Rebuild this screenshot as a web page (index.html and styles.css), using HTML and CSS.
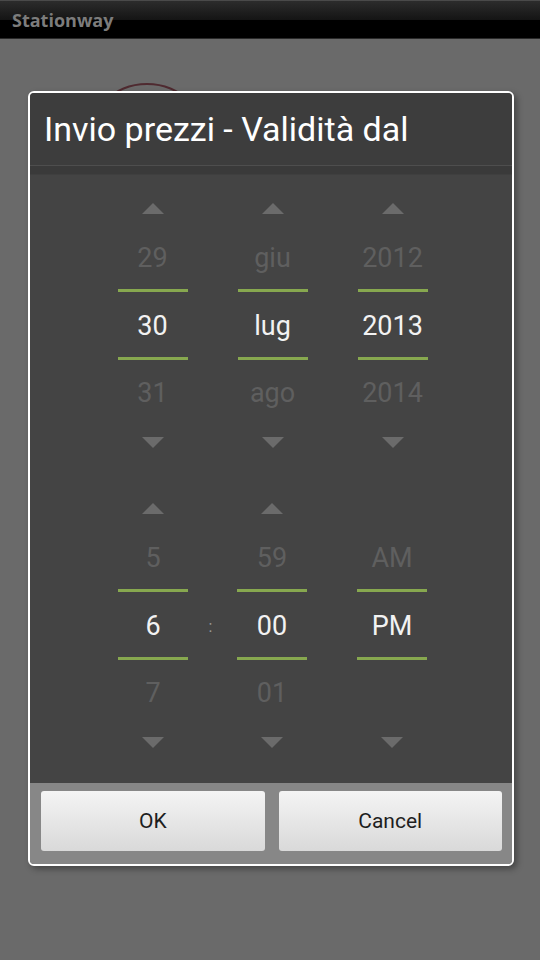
FILE: index.html
```html
<!DOCTYPE html>
<html lang="it">
	<head>
		<meta charset="utf-8">
		<title>Stationway</title>
		<link rel="stylesheet" href="styles.css">
	</head>
	<body>
		<header class="topbar">Stationway</header>

		<main class="screen">
			<div class="logo"></div>

			<div class="dialog">
				<div class="dialogTitle">Invio prezzi - Validità dal</div>

				<div class="dialogBody">
					<!-- Date -->
					<div class="pickerRow dateRow">
						<div class="picker">
							<div class="arrow up"></div>
							<div class="val prev">29</div>
							<div class="val sel">30</div>
							<div class="val next">31</div>
							<div class="arrow down"></div>
						</div>
						<div class="picker">
							<div class="arrow up"></div>
							<div class="val prev">giu</div>
							<div class="val sel">lug</div>
							<div class="val next">ago</div>
							<div class="arrow down"></div>
						</div>
						<div class="picker">
							<div class="arrow up"></div>
							<div class="val prev">2012</div>
							<div class="val sel">2013</div>
							<div class="val next">2014</div>
							<div class="arrow down"></div>
						</div>
					</div>

					<!-- Time -->
					<div class="pickerRow timeRow">
						<div class="picker">
							<div class="arrow up"></div>
							<div class="val prev">5</div>
							<div class="val sel">6</div>
							<div class="val next">7</div>
							<div class="arrow down"></div>
						</div>
						<div class="colon">:</div>
						<div class="picker">
							<div class="arrow up"></div>
							<div class="val prev">59</div>
							<div class="val sel">00</div>
							<div class="val next">01</div>
							<div class="arrow down"></div>
						</div>
						<div></div>
						<div class="picker">
							<div class="arrow up hidden"></div>
							<div class="val prev">AM</div>
							<div class="val sel">PM</div>
							<div class="val next">&nbsp;</div>
							<div class="arrow down"></div>
						</div>
					</div>
				</div>

				<div class="buttonBar">
					<button class="btn">OK</button>
					<button class="btn">Cancel</button>
				</div>
			</div>
		</main>
	</body>
</html>
```

FILE: styles.css
```css
body {
	margin: 0;
	width: 540px;
	height: 960px;
	background-color: #6a6a6a;
	font-family: Roboto, "Noto Sans", sans-serif;
	overflow: hidden;
}

.topbar {
	height: 36px;
	padding-top: 1px;
	padding-left: 12px;
	line-height: 36px;
	border-top: 1px solid #4a4a4a;
	border-bottom: 1px solid #2a2a2a;
	background: linear-gradient(#2c2c2c, #151515 50%, #000 51%, #000);
	color: #7c7c7c;
	font-family: "Open Sans", Roboto, sans-serif;
	font-size: 18px;
	font-weight: bold;
}

.screen {
	position: relative;
	padding-top: 52px;
}

.logo {
	position: absolute;
	left: 85px;
	top: 44px;
	width: 120px;
	height: 120px;
	border: 2px solid #4f2a30;
	border-radius: 50%;
}

.dialog {
	position: relative;
	z-index: 1;
	box-sizing: border-box;
	width: 486px;
	margin-left: 28px;
	border: 2px solid #fff;
	border-radius: 6px;
	overflow: hidden;
	box-shadow: 3px 3px 6px rgba(0, 0, 0, 0.35);
}

.dialogTitle {
	height: 72px;
	padding-left: 14px;
	line-height: 72px;
	background-color: #3d3d3d;
	border-bottom: 1px solid #4e4e4e;
	color: #fff;
	font-size: 34px;
}

.dialogBody {
	height: 617px;
	box-sizing: border-box;
	padding-top: 18px;
	background: linear-gradient(#3a3a3a 0, #3a3a3a 8px, #444 9px);
}

.pickerRow {
	display: flex;
	justify-content: center;
	padding-left: 3px;
}

.dateRow {
	gap: 50px;
	margin-bottom: 19px;
}

.timeRow {
	display: grid;
	grid-template-columns: 70px 49px 70px 50px 70px;
	justify-content: center;
}

.picker {
	width: 70px;
	display: flex;
	flex-direction: column;
	text-align: center;
}

.arrow {
	height: 48px;
	display: flex;
	align-items: center;
	justify-content: center;
}

.arrow.up::before {
	content: "";
	border-left: 11px solid transparent;
	border-right: 11px solid transparent;
	border-bottom: 11px solid #6b6b6b;
}

.arrow.down {
	height: 46px;
}

.arrow.down::before {
	content: "";
	border-left: 11px solid transparent;
	border-right: 11px solid transparent;
	border-top: 11px solid #6b6b6b;
}

.hidden {
	visibility: hidden;
}

.val {
	height: 52px;
	line-height: 52px;
	font-size: 27px;
	color: #5f5f5f;
}

.prev {
	margin-bottom: 5px;
}

.next {
	margin-top: 7px;
}

.sel {
	height: 65px;
	line-height: 68px;
	color: #f2f2f2;
	border-top: 3px solid #87a84f;
	border-bottom: 3px solid #87a84f;
}

.colon {
	padding-top: 105px;
	padding-right: 4px;
	height: 71px;
	line-height: 75px;
	text-align: center;
	color: #9a9a9a;
	font-size: 16px;
}

.buttonBar {
	display: flex;
	gap: 14px;
	padding: 8px 10px 13px 11px;
	background-color: #878787;
}

.btn {
	flex: 1;
	height: 60px;
	border: none;
	border-radius: 3px;
	background: linear-gradient(#f4f4f4, #d9d9d9);
	color: #1e1e1e;
	font-family: Roboto, "Noto Sans", sans-serif;
	font-size: 21px;
}
```
